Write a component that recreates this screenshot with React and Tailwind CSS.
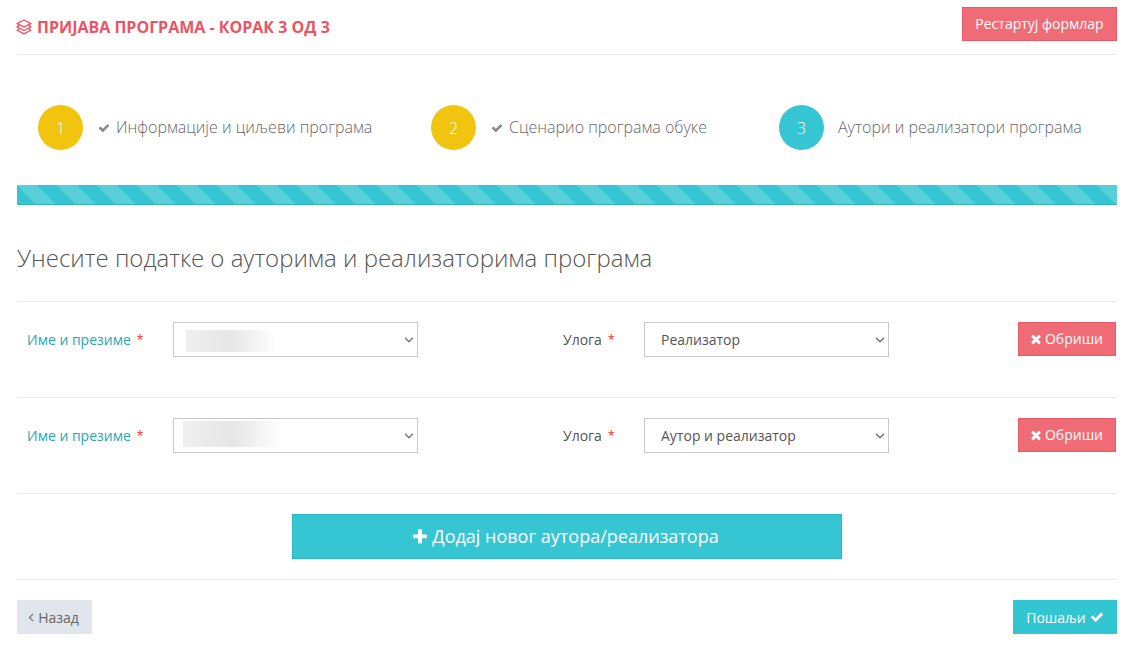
import React from "react";
import { ChevronDown } from "lucide-react";

// font-awesome 4 glyphs, the react-icons set only has the newer shapes
const glyphs = {
  check:
    "M1671 566q0 40-28 68l-724 724-136 136q-28 28-68 28t-68-28l-136-136-362-362q-28-28-28-68t28-68l136-136q28-28 68-28t68 28l294 295 656-657q28-28 68-28t68 28l136 136q28 28 28 68z",
  times:
    "M1490 1322q0 40-28 68l-136 136q-28 28-68 28t-68-28l-294-294-294 294q-28 28-68 28t-68-28l-136-136q-28-28-28-68t28-68l294-294-294-294q-28-28-28-68t28-68l136-136q28-28 68-28t68 28l294 294 294-294q28-28 68-28t68 28l136 136q28 28 28 68t-28 68l-294 294 294 294q28 28 28 68z",
  plus:
    "M1600 736v192q0 40-28 68t-68 28h-416v416q0 40-28 68t-68 28h-192q-40 0-68-28t-28-68v-416h-416q-40 0-68-28t-28-68v-192q0-40 28-68t68-28h416v-416q0-40 28-68t68-28h192q40 0 68 28t28 68v416h416q40 0 68 28t28 68z",
  angleLeft:
    "M1203 544q0 13-10 23l-393 393 393 393q10 10 10 23t-10 23l-50 50q-10 10-23 10t-23-10l-466-466q-10-10-10-23t10-23l466-466q10-10 23-10t23 10l50 50q10 10 10 23z",
};

const Fa = ({ name, className }) => (
  <svg viewBox="0 0 1792 1792" fill="currentColor" className={className}>
    <path d={glyphs[name]} />
  </svg>
);

const LayersIcon = () => (
  <svg viewBox="0 0 16 16" fill="none" stroke="currentColor" strokeWidth="1.3" strokeLinejoin="round" className="w-4 h-4 -ml-px">
    <path d="M8 1 15 4.6 8 8.2 1 4.6z" />
    <path d="M3.4 6.4 1 7.9l7 3.6 7-3.6-2.4-1.5" />
    <path d="M3.4 9.7 1 11.2l7 3.6 7-3.6-2.4-1.5" />
  </svg>
);

const steps = [
  { n: 1, label: "Информације и циљеви програма", done: true, width: "w-[393px]" },
  { n: 2, label: "Сценарио програма обуке", done: true, width: "w-[348px]" },
  { n: 3, label: "Аутори и реализатори програма", done: false, width: "w-auto" },
];

const authors = [
  { role: "Реализатор", blur: "left-[13px] top-[8px] w-[90px] h-[22px]" },
  { role: "Аутор и реализатор", blur: "left-[10px] top-[3px] w-[100px] h-[26px]" },
];

const Step = ({ step }) => (
  <div className={`flex items-center ${step.width}`}>
    <div
      className={`w-[45px] h-[45px] rounded-full flex items-center justify-center text-white text-[16px] font-light ${
        step.done ? "bg-[#f1c40f]" : "bg-[#36c6d3]"
      }`}
    >
      {step.n}
    </div>
    {step.done ? (
      <Fa name="check" className="ml-[15px] mr-[6px] w-3 h-3 text-[#8a8a8a]" />
    ) : (
      <span className="w-[14px]" />
    )}
    <span className="pb-[2px] text-[16px] font-light text-[#666]">{step.label}</span>
  </div>
);

const Select = ({ children, defaultValue }) => (
  <div className="relative">
    <select
      defaultValue={defaultValue}
      className="appearance-none block w-[245px] h-[35px] border border-[#c8c8c8] bg-white pl-4 text-[14px] text-[#555]"
    >
      {children}
    </select>
    <ChevronDown size={14} strokeWidth={2.5} className="absolute right-[2px] top-[11px] text-[#777] pointer-events-none" />
  </div>
);

const AuthorRow = ({ author }) => (
  <div className="h-[96px] border-t border-[#eaeaea] pt-5 flex items-start pl-[10px] pr-px">
    <label className="w-[146px] h-[35px] flex items-center text-[14px] text-[#2aa5b3]">
      Име и презиме <span className="ml-[6px] text-[12px] text-[#f22]">*</span>
    </label>
    <div className="relative">
      <Select>
        <option></option>
      </Select>
      <div className={`absolute bg-gradient-to-r from-[#efefef] via-[#e6e6e6] to-white ${author.blur}`} />
    </div>
    <label className="ml-[145px] w-[81px] h-[35px] flex items-center text-[14px] text-[#555]">
      Улога <span className="ml-[6px] text-[12px] text-[#f22]">*</span>
    </label>
    <Select defaultValue={author.role}>
      <option>Реализатор</option>
      <option>Аутор и реализатор</option>
    </Select>
    <button className="ml-auto w-[98px] h-[34px] pb-[2px] pr-[2px] flex items-center justify-center gap-[2px] bg-[#ef6b76] border border-[#e85a66] text-white text-[14px]">
      <Fa name="times" className="w-[14px] h-[14px] mt-[2px]" />
      Обриши
    </button>
  </div>
);

export default function App() {
  return (
    <div className="min-h-[656px] bg-white pl-[17px] pr-[14px] font-['Open_Sans',sans-serif]">
      {/* Header */}
      <div className="h-[55px] border-b border-[#eaeaea] flex items-start justify-between pt-[7px]">
        <h1 className="h-[40px] flex items-center gap-[5px] text-[#e95563] text-[16px] font-bold">
          <LayersIcon />
          ПРИЈАВА ПРОГРАМА - КОРАК 3 ОД 3
        </h1>
        <button className="w-[155px] h-[34px] pb-[2px] bg-[#ef6b76] border border-[#e85a66] text-white text-[14px]">
          Рестартуј формлар
        </button>
      </div>

      {/* Steps */}
      <div className="pt-[50px] pl-[21px] flex">
        {steps.map((step) => (
          <Step key={step.n} step={step} />
        ))}
      </div>

      {/* Progress */}
      <div className="mt-[35px] h-5 border-b border-[#2fb4c1] bg-[#36c6d3] bg-[linear-gradient(45deg,rgba(255,255,255,0.17)_25%,transparent_25%,transparent_50%,rgba(255,255,255,0.17)_50%,rgba(255,255,255,0.17)_75%,transparent_75%,transparent)] bg-[length:40px_40px]" />

      <h2 className="mt-[37px] mb-[27px] h-[32px] leading-[32px] text-[24px] font-light text-[#555]">
        Унесите податке о ауторима и реализаторима програма
      </h2>

      {authors.map((author, i) => (
        <AuthorRow key={i} author={author} />
      ))}

      {/* Add */}
      <div className="h-[87px] border-t border-b border-[#eaeaea] pt-5 flex justify-center">
        <button className="w-[550px] h-[45px] pr-1 bg-[#36c6d3] border border-[#2fb8c5] text-white text-[18px] flex items-center justify-center gap-[3px]">
          <Fa name="plus" className="w-[18px] h-[18px]" />
          Додај новог аутора/реализатора
        </button>
      </div>

      {/* Footer */}
      <div className="pt-5 flex items-start justify-between">
        <button className="w-[75px] h-[34px] pr-[6px] bg-[#e1e5ec] text-[#666] text-[14px] flex items-center justify-center">
          <Fa name="angleLeft" className="w-[14px] h-[14px]" />
          Назад
        </button>
        <button className="w-[104px] h-[34px] bg-[#32c5d2] text-white text-[14px] flex items-center justify-center gap-[4px]">
          Пошаљи
          <Fa name="check" className="w-[14px] h-[14px]" />
        </button>
      </div>
    </div>
  );
}
